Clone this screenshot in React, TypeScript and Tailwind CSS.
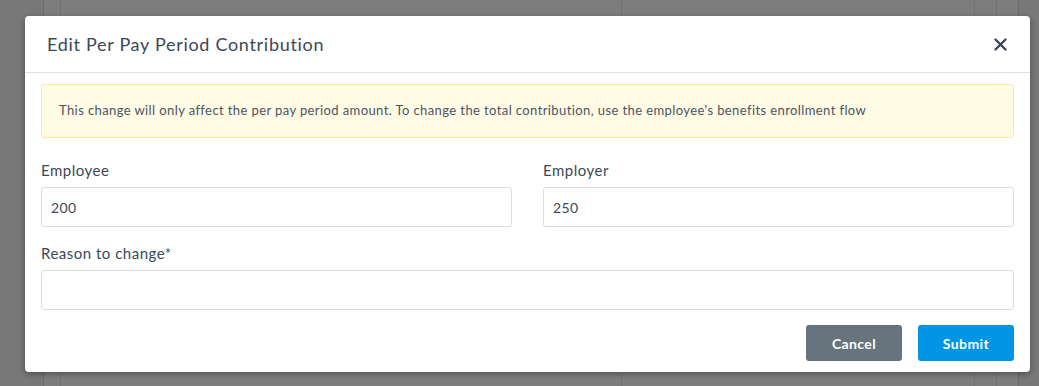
export default function App() {
  return (
    <div
      className="relative h-[386px] w-[1039px] overflow-hidden bg-[#787878]"
      style={{ fontFamily: "Lato, 'Open Sans', sans-serif" }}
    >
      {/* page underneath the overlay */}
      <div className="absolute inset-y-0 left-[43px] flex w-[976px] border-x border-[#6c6c6c] bg-[#7d7d7d]">
        <div className="ml-[16px] h-full w-[562px] border-x border-[#727272]" />
        <div className="ml-[0px] h-full w-[353px] border-r border-[#727272]" />
        <div className="ml-[21px] h-full border-l border-[#727272]" />
      </div>

      {/* modal */}
      <div className="absolute left-[25px] top-[16px] w-[1005px] rounded-[4px] bg-white shadow-[0_2px_6px_rgba(0,0,0,0.35)]">
        <div className="flex h-[57px] items-center justify-between border-b border-[#dde1e5] pl-[22px] pr-[20px]">
          <h2 className="text-[18px] tracking-[0.7px] text-[#3d4857]">Edit Per Pay Period Contribution</h2>
          <button className="flex h-5 w-5 items-center justify-center text-[#3d4857]">
            <svg width="13" height="13" viewBox="0 0 13 13">
              <path d="M1.5 1.5l10 10M11.5 1.5l-10 10" stroke="currentColor" strokeWidth="2.4" strokeLinecap="round" />
            </svg>
          </button>
        </div>

        <div className="px-[16px] pb-[11px] pt-[11px]">
          <div className="flex h-[54px] items-center rounded-[3px] border border-[#fbeaa5] bg-[#fffbe5] px-[17px] text-[13px] tracking-[0.4px] text-[#4a5563]">
            This change will only affect the per pay period amount. To change the total contribution, use the employee's benefits enrollment flow
          </div>

          <div className="mt-[23px] grid grid-cols-2 gap-x-[31px]">
            <label className="flex flex-col">
              <span className="text-[15px] leading-[18px] tracking-[0.5px] text-[#3d4857]">Employee</span>
              <input
                defaultValue="200"
                className="mt-[8px] h-[40px] rounded-[3px] border border-[#d9dde1] px-[9px] text-[14px] tracking-[0.4px] text-[#3d4857] outline-none"
              />
            </label>
            <label className="flex flex-col">
              <span className="text-[15px] leading-[18px] tracking-[0.5px] text-[#3d4857]">Employer</span>
              <input
                defaultValue="250"
                className="mt-[8px] h-[40px] rounded-[3px] border border-[#d9dde1] px-[9px] text-[14px] tracking-[0.4px] text-[#3d4857] outline-none"
              />
            </label>
          </div>

          <label className="mt-[17px] flex flex-col">
            <span className="text-[15px] leading-[18px] tracking-[0.5px] text-[#3d4857]">Reason to change*</span>
            <input className="mt-[8px] h-[40px] rounded-[3px] border border-[#d9dde1] px-[9px] text-[14px] outline-none" />
          </label>

          <div className="mt-[15px] flex justify-end gap-[16px]">
            <button className="h-[36px] w-[96px] rounded-[3px] bg-[#67747e] text-[14px] font-bold tracking-[0.4px] text-white">
              Cancel
            </button>
            <button className="h-[36px] w-[96px] rounded-[3px] bg-[#0096e5] text-[14px] font-bold tracking-[0.4px] text-white">
              Submit
            </button>
          </div>
        </div>
      </div>
    </div>
  );
}
